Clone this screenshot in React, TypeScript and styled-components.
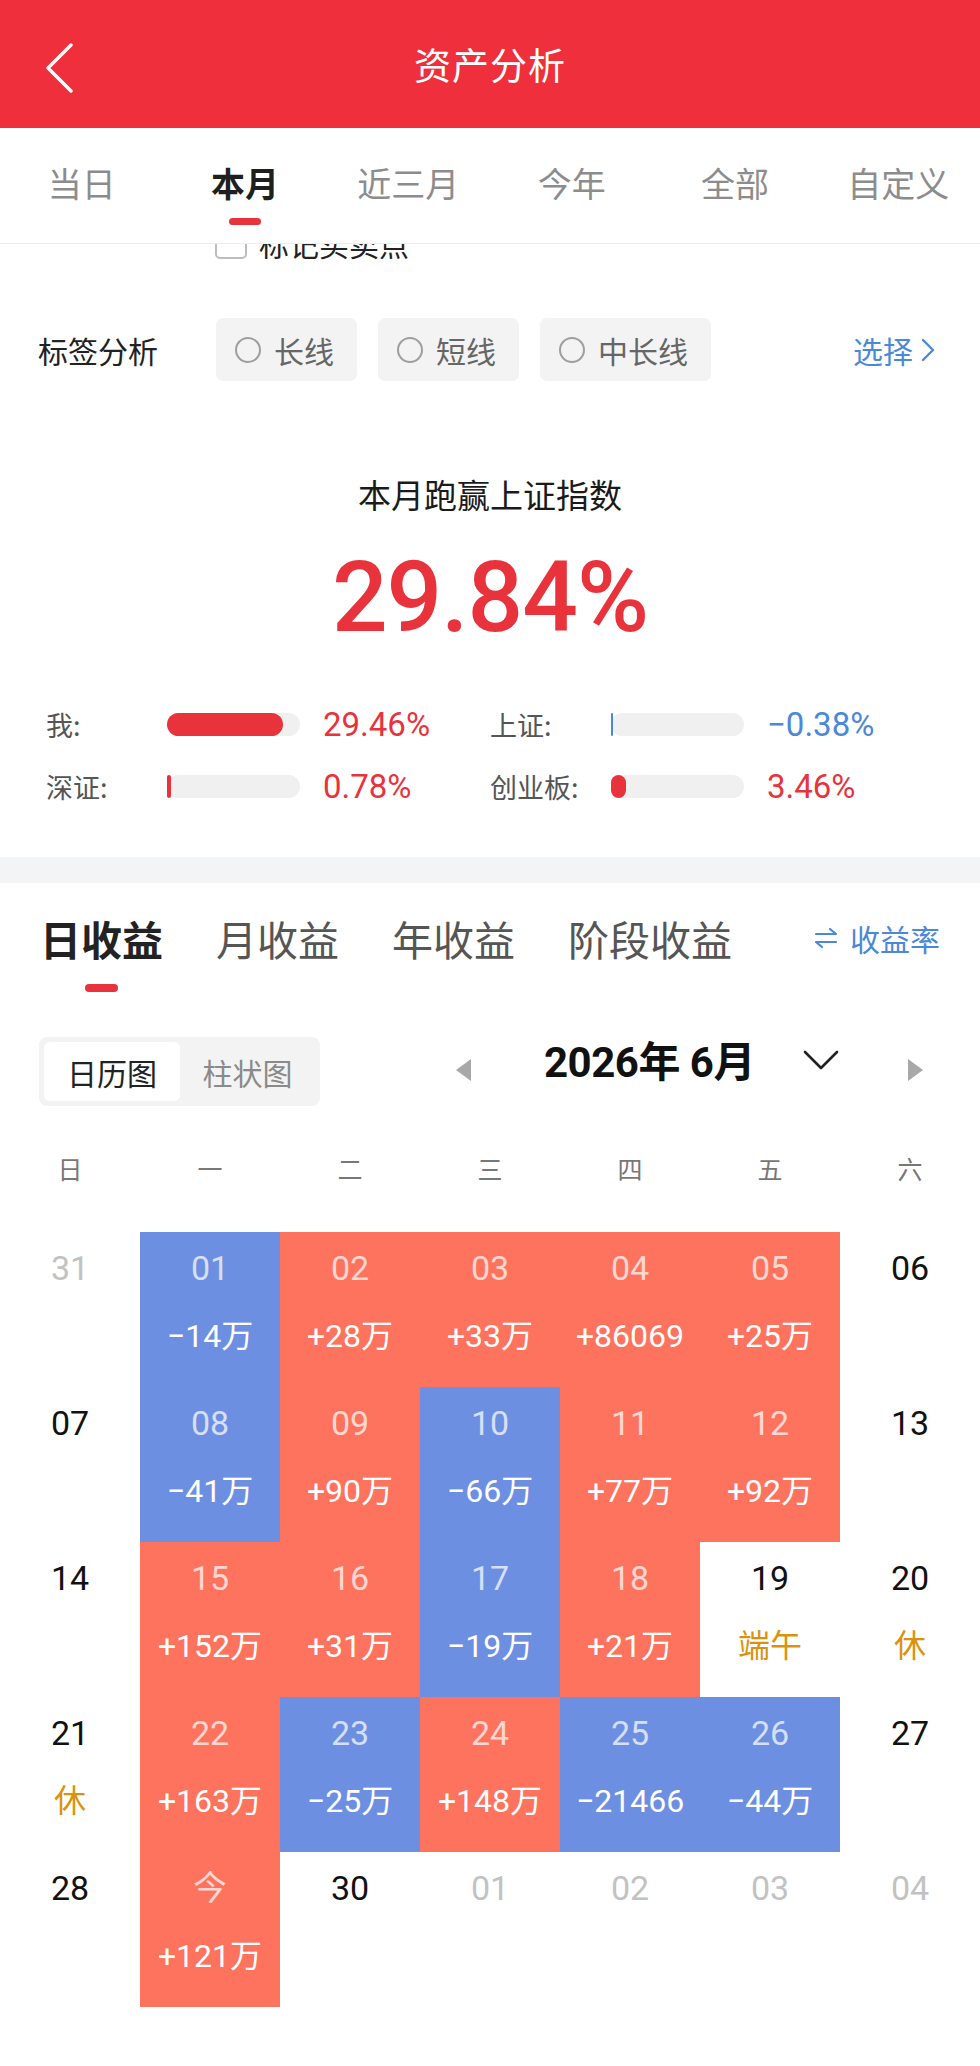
import React from "react";
import styled, { createGlobalStyle } from "styled-components";

const GlobalStyle = createGlobalStyle`
  html, body { margin: 0; padding: 0; background: #fff; }
  body { font-family: Roboto, "Noto Sans CJK SC", sans-serif; color: #222; }
  * { box-sizing: border-box; }
`;

const RED = "#ef2f3b";
const UP = "#e8333c";
const DOWN = "#4a88d9";
const CELL_UP = "#fe735e";
const CELL_DOWN = "#6d8fe1";
const HOLIDAY = "#d9930f";

const Page = styled.div`
  width: 980px;
  height: 2066px;
  overflow: hidden;
  background: #fff;
  display: flex;
  flex-direction: column;
`;

/* ---------- top navigation ---------- */
const NavBar = styled.header`
  position: relative;
  height: 128px;
  flex: none;
  background: ${RED};
  display: flex;
  align-items: center;
  justify-content: center;
`;

const BackButton = styled.button`
  position: absolute;
  left: 32px;
  top: 36px;
  width: 56px;
  height: 64px;
  border: 0;
  padding: 0;
  background: transparent;
  display: flex;
  align-items: center;
  justify-content: center;
`;

const NavTitle = styled.h1`
  margin: 0;
  font-family: "Noto Sans CJK SC", sans-serif;
  font-weight: 400;
  font-size: 37px;
  letter-spacing: 1px;
  color: #fff;
`;

const PeriodTabs = styled.nav`
  height: 116px;
  flex: none;
  display: grid;
  grid-template-columns: repeat(6, 1fr);
  border-bottom: 1px solid #eeeeee;
  background: #fff;
  position: relative;
  z-index: 2;
`;

const PeriodTab = styled.div<{ $active?: boolean }>`
  display: flex;
  flex-direction: column;
  align-items: center;
  padding-top: 34px;
  font-family: "Noto Sans CJK SC", sans-serif;
  font-size: 34px;
  line-height: 42px;
  font-weight: ${(p) => (p.$active ? 700 : 400)};
  color: ${(p) => (p.$active ? "#1f1f1f" : "#8c8c8c")};
`;

const TabMark = styled.span<{ $w: number; $h: number; $top: number }>`
  display: block;
  width: ${(p) => p.$w}px;
  height: ${(p) => p.$h}px;
  margin-top: ${(p) => p.$top}px;
  border-radius: 4px;
  background: ${UP};
`;

/* ---------- scrolled body ---------- */
const Body = styled.main`
  flex: 1;
  overflow: hidden;
  display: flex;
  flex-direction: column;
`;

const MarkRow = styled.label`
  margin-top: -33px;
  height: 64px;
  flex: none;
  display: flex;
  align-items: center;
  padding-left: 215px;
  gap: 12px;
  font-family: "Noto Sans CJK SC", sans-serif;
  font-size: 30px;
  color: #222;
`;

const CheckBox = styled.span`
  width: 32px;
  height: 32px;
  border: 2px solid #bdbdbd;
  border-radius: 5px;
  background: #fff;
`;

const TagRow = styled.div`
  margin-top: 43px;
  height: 63px;
  display: flex;
  align-items: center;
  padding: 0 45px 0 38px;
`;

const TagLabel = styled.span`
  width: 178px;
  font-family: "Noto Sans CJK SC", sans-serif;
  font-size: 30px;
  color: #222;
`;

const Chips = styled.div`
  display: flex;
  gap: 21px;
  flex: 1;
`;

const Chip = styled.div`
  height: 63px;
  padding: 0 23px 0 19px;
  border-radius: 7px;
  background: #f3f3f3;
  display: flex;
  align-items: center;
  gap: 13px;
  font-family: "Noto Sans CJK SC", sans-serif;
  font-size: 30px;
  color: #666;
`;

const Radio = styled.span`
  width: 26px;
  height: 26px;
  border-radius: 50%;
  border: 2px solid #9e9e9e;
`;

const SelectLink = styled.div`
  display: flex;
  align-items: center;
  gap: 8px;
  font-family: "Noto Sans CJK SC", sans-serif;
  font-size: 30px;
  color: ${DOWN};
`;

const Headline = styled.div`
  margin-top: 93px;
  text-align: center;
  font-family: "Noto Sans CJK SC", sans-serif;
  font-size: 33px;
  line-height: 40px;
  color: #1a1a1a;
`;

const BigRate = styled.div`
  margin-top: 29px;
  text-align: center;
  font-family: Roboto, sans-serif;
  font-weight: 500;
  font-size: 98px;
  line-height: 110px;
  color: ${UP};
  letter-spacing: -1px;
`;

const Stats = styled.div`
  margin-top: 51px;
  padding: 0 0 51px 46px;
  display: grid;
  grid-template-columns: 444px 444px;
  row-gap: 22px;
`;

const Stat = styled.div`
  height: 40px;
  display: flex;
  align-items: center;
`;

const StatLabel = styled.span`
  width: 121px;
  font-family: "Noto Sans CJK SC", sans-serif;
  font-size: 27px;
  color: #555;
`;

const Track = styled.div`
  width: 133px;
  height: 23px;
  border-radius: 12px;
  background: #f0f0f0;
  display: flex;
`;

const Fill = styled.div<{ $color: string; $radius: number }>`
  height: 100%;
  background: ${(p) => p.$color};
  border-radius: ${(p) => p.$radius}px;
`;

const StatValue = styled.span<{ $color: string }>`
  margin-left: 23px;
  font-family: Roboto, sans-serif;
  font-size: 33px;
  color: ${(p) => p.$color};
`;

const Divider = styled.div`
  height: 26px;
  flex: none;
  background: #f3f4f6;
`;

const ProfitTabs = styled.div`
  margin-top: 31px;
  display: flex;
  align-items: flex-start;
  padding: 0 40px 0 40px;
  gap: 53px;
`;

const ProfitTab = styled.div<{ $active?: boolean }>`
  display: flex;
  flex-direction: column;
  align-items: center;
  font-family: "Noto Sans CJK SC", sans-serif;
  font-size: 41px;
  line-height: 48px;
  font-weight: ${(p) => (p.$active ? 700 : 400)};
  color: ${(p) => (p.$active ? "#222" : "#555")};
`;

const RateSwitch = styled.div`
  margin-left: auto;
  height: 48px;
  display: flex;
  align-items: center;
  gap: 12px;
  font-family: "Noto Sans CJK SC", sans-serif;
  font-size: 30px;
  color: ${DOWN};
`;

const Toolbar = styled.div`
  margin-top: 45px;
  height: 69px;
  display: flex;
  align-items: flex-start;
  padding-left: 39px;
`;

const Segmented = styled.div`
  width: 281px;
  height: 69px;
  padding: 5px;
  border-radius: 8px;
  background: #f3f3f3;
  display: grid;
  grid-template-columns: 136px 1fr;
`;

const Segment = styled.div<{ $active?: boolean }>`
  border-radius: 6px;
  background: ${(p) => (p.$active ? "#fff" : "transparent")};
  display: flex;
  align-items: center;
  justify-content: center;
  font-family: "Noto Sans CJK SC", sans-serif;
  font-size: 30px;
  color: ${(p) => (p.$active ? "#222" : "#8a8a8a")};
`;

/* month switcher: each part sits at its own height inside the 69px bar */
const MonthNav = styled.div`
  display: flex;
  align-items: flex-start;
  margin-left: 135px;
`;

const MonthLabel = styled.div`
  margin: 3px 0 0 72px;
  width: 206px;
  font-family: Roboto, "Noto Sans CJK SC", sans-serif;
  font-weight: 700;
  font-size: 42px;
  line-height: 46px;
  letter-spacing: -0.5px;
  color: #111;
  white-space: nowrap;
`;

const NavIcon = styled.span<{ $gap: number; $top: number }>`
  margin-left: ${(p) => p.$gap}px;
  margin-top: ${(p) => p.$top}px;
  display: flex;
`;

const WeekHead = styled.div`
  margin-top: 44px;
  display: grid;
  grid-template-columns: repeat(7, 140px);
`;

const WeekDay = styled.div`
  text-align: center;
  font-family: "Noto Sans CJK SC", sans-serif;
  font-size: 25px;
  line-height: 36px;
  color: #777;
`;

const CalendarGrid = styled.div`
  margin-top: 46px;
  display: grid;
  grid-template-columns: repeat(7, 140px);
  grid-auto-rows: 155px;
`;

type Tone = "up" | "down" | "none";

const Cell = styled.div<{ $tone: Tone }>`
  display: flex;
  flex-direction: column;
  align-items: center;
  padding-top: 15px;
  gap: 27px;
  background: ${(p) =>
    p.$tone === "up" ? CELL_UP : p.$tone === "down" ? CELL_DOWN : "transparent"};
`;

const DayNum = styled.span<{ $color: string }>`
  font-family: Roboto, "Noto Sans CJK SC", sans-serif;
  font-size: 34px;
  line-height: 42px;
  color: ${(p) => p.$color};
`;

const DayValue = styled.span<{ $color: string }>`
  font-family: Roboto, "Noto Sans CJK SC", sans-serif;
  font-size: 32px;
  line-height: 40px;
  color: ${(p) => p.$color};
`;

/* ---------- data ---------- */
type Day = {
  d: string;
  v?: string;
  tone?: Tone;
  other?: boolean;
  note?: string;
};

const weeks: Day[][] = [
  [
    { d: "31", other: true },
    { d: "01", v: "−14万", tone: "down" },
    { d: "02", v: "+28万", tone: "up" },
    { d: "03", v: "+33万", tone: "up" },
    { d: "04", v: "+86069", tone: "up" },
    { d: "05", v: "+25万", tone: "up" },
    { d: "06" },
  ],
  [
    { d: "07" },
    { d: "08", v: "−41万", tone: "down" },
    { d: "09", v: "+90万", tone: "up" },
    { d: "10", v: "−66万", tone: "down" },
    { d: "11", v: "+77万", tone: "up" },
    { d: "12", v: "+92万", tone: "up" },
    { d: "13" },
  ],
  [
    { d: "14" },
    { d: "15", v: "+152万", tone: "up" },
    { d: "16", v: "+31万", tone: "up" },
    { d: "17", v: "−19万", tone: "down" },
    { d: "18", v: "+21万", tone: "up" },
    { d: "19", note: "端午" },
    { d: "20", note: "休" },
  ],
  [
    { d: "21", note: "休" },
    { d: "22", v: "+163万", tone: "up" },
    { d: "23", v: "−25万", tone: "down" },
    { d: "24", v: "+148万", tone: "up" },
    { d: "25", v: "−21466", tone: "down" },
    { d: "26", v: "−44万", tone: "down" },
    { d: "27" },
  ],
  [
    { d: "28" },
    { d: "今", v: "+121万", tone: "up" },
    { d: "30" },
    { d: "01", other: true },
    { d: "02", other: true },
    { d: "03", other: true },
    { d: "04", other: true },
  ],
];

const stats = [
  { label: "我:", value: "29.46%", color: UP, width: 116, radius: 12 },
  { label: "上证:", value: "−0.38%", color: DOWN, width: 2, radius: 1 },
  { label: "深证:", value: "0.78%", color: UP, width: 4, radius: 2 },
  { label: "创业板:", value: "3.46%", color: UP, width: 15, radius: 8 },
];

const periods = ["当日", "本月", "近三月", "今年", "全部", "自定义"];
const profitTabs = ["日收益", "月收益", "年收益", "阶段收益"];
const weekdays = ["日", "一", "二", "三", "四", "五", "六"];

const Triangle = ({ dir }: { dir: "left" | "right" }) => (
  <svg width="17" height="22" viewBox="0 0 17 22">
    {dir === "left" ? (
      <path d="M16 0 L1 11 L16 22 Z" fill="#a8a8a8" />
    ) : (
      <path d="M1 0 L16 11 L1 22 Z" fill="#a8a8a8" />
    )}
  </svg>
);

export default function App() {
  return (
    <Page>
      <GlobalStyle />
      <NavBar>
        <BackButton aria-label="返回">
          <svg width="30" height="50" viewBox="0 0 30 50">
            <path
              d="M26 2 L3 25 L26 48"
              fill="none"
              stroke="#fff"
              strokeWidth="3.4"
              strokeLinecap="round"
              strokeLinejoin="round"
            />
          </svg>
        </BackButton>
        <NavTitle>资产分析</NavTitle>
      </NavBar>

      <PeriodTabs>
        {periods.map((p) => (
          <PeriodTab key={p} $active={p === "本月"}>
            {p}
            {p === "本月" && <TabMark $w={32} $h={7} $top={14} />}
          </PeriodTab>
        ))}
      </PeriodTabs>

      <Body>
        <MarkRow>
          <CheckBox />
          标记买卖点
        </MarkRow>

        <TagRow>
          <TagLabel>标签分析</TagLabel>
          <Chips>
            {["长线", "短线", "中长线"].map((t) => (
              <Chip key={t}>
                <Radio />
                {t}
              </Chip>
            ))}
          </Chips>
          <SelectLink>
            选择
            <svg width="14" height="24" viewBox="0 0 14 24">
              <path
                d="M2 2 L12 12 L2 22"
                fill="none"
                stroke={DOWN}
                strokeWidth="2.4"
                strokeLinecap="round"
                strokeLinejoin="round"
              />
            </svg>
          </SelectLink>
        </TagRow>

        <Headline>本月跑赢上证指数</Headline>
        <BigRate>29.84%</BigRate>

        <Stats>
          {stats.map((s) => (
            <Stat key={s.label}>
              <StatLabel>{s.label}</StatLabel>
              <Track>
                <Fill
                  $color={s.color}
                  $radius={s.radius}
                  style={{ width: s.width }}
                />
              </Track>
              <StatValue $color={s.color}>{s.value}</StatValue>
            </Stat>
          ))}
        </Stats>

        <Divider />

        <ProfitTabs>
          {profitTabs.map((t, i) => (
            <ProfitTab key={t} $active={i === 0}>
              {t}
              {i === 0 && <TabMark $w={33} $h={8} $top={22} />}
            </ProfitTab>
          ))}
          <RateSwitch>
            <svg width="24" height="22" viewBox="0 0 24 22">
              <path
                d="M2 7 H22 L16 2 M22 15 H2 L8 20"
                fill="none"
                stroke={DOWN}
                strokeWidth="2.2"
                strokeLinecap="round"
                strokeLinejoin="round"
              />
            </svg>
            收益率
          </RateSwitch>
        </ProfitTabs>

        <Toolbar>
          <Segmented>
            <Segment $active>日历图</Segment>
            <Segment>柱状图</Segment>
          </Segmented>
          <MonthNav>
            <NavIcon $gap={0} $top={22}>
              <Triangle dir="left" />
            </NavIcon>
            <MonthLabel>2026年 6月</MonthLabel>
            <NavIcon $gap={53} $top={13}>
              <svg width="36" height="20" viewBox="0 0 36 20">
                <path
                  d="M2 2 L18 18 L34 2"
                  fill="none"
                  stroke="#222"
                  strokeWidth="2.6"
                  strokeLinecap="round"
                  strokeLinejoin="round"
                />
              </svg>
            </NavIcon>
            <NavIcon $gap={68} $top={22}>
              <Triangle dir="right" />
            </NavIcon>
          </MonthNav>
        </Toolbar>

        <WeekHead>
          {weekdays.map((w) => (
            <WeekDay key={w}>{w}</WeekDay>
          ))}
        </WeekHead>

        <CalendarGrid>
          {weeks.flat().map((day, i) => {
            const tone: Tone = day.tone ?? "none";
            const dateColor = day.other
              ? "#c2c2c2"
              : tone === "none"
              ? "#111"
              : "rgba(255,255,255,0.72)";
            return (
              <Cell key={i} $tone={tone}>
                <DayNum $color={dateColor}>{day.d}</DayNum>
                {day.v && <DayValue $color="#fff">{day.v}</DayValue>}
                {day.note && <DayValue $color={HOLIDAY}>{day.note}</DayValue>}
              </Cell>
            );
          })}
        </CalendarGrid>
      </Body>
    </Page>
  );
}
